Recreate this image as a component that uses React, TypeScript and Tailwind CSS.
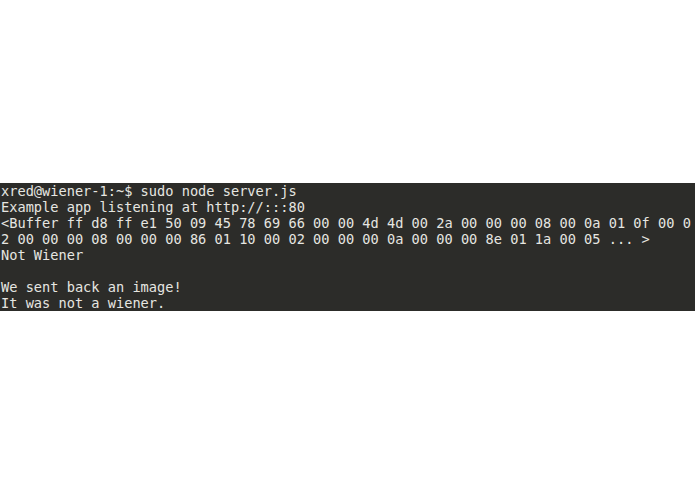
export default function App() {
  const lines = [
    "xred@wiener-1:~$ sudo node server.js",
    "Example app listening at http://:::80",
    "<Buffer ff d8 ff e1 50 09 45 78 69 66 00 00 4d 4d 00 2a 00 00 00 08 00 0a 01 0f 00 0",
    "2 00 00 00 08 00 00 00 86 01 10 00 02 00 00 00 0a 00 00 00 8e 01 1a 00 05 ... >",
    "Not Wiener",
    "",
    "We sent back an image!",
    "It was not a wiener.",
  ];
  return (
    <div className="w-[695px] h-[494px] bg-white pt-[183px] overflow-hidden">
      <div
        className="w-[695px] h-[128px] bg-[#2c2c29] text-[#e6e6e1] pl-[1px] text-[13.65px] leading-[16px] whitespace-pre overflow-hidden"
        style={{ fontFamily: '"DejaVu Sans Mono", monospace' }}
      >
        {lines.map((l, i) => (
          <div key={i} className="h-[16px]">
            {l}
          </div>
        ))}
      </div>
    </div>
  );
}
